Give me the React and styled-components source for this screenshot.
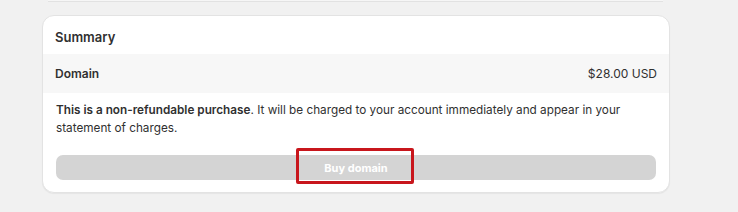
import React from "react";
import styled, { createGlobalStyle } from "styled-components";

const Global = createGlobalStyle`
  html, body { margin: 0; padding: 0; background: #f1f1f1; }
  body {
    font-family: Inter, "Noto Sans", sans-serif;
    color: #303030;
    -webkit-font-smoothing: antialiased;
  }
`;

const Page = styled.div`
  width: 738px;
  height: 212px;
  display: flex;
  flex-direction: column;
  box-sizing: border-box;
`;

const PrevCard = styled.div`
  margin: 0 75px 0 48px;
  height: 1px;
  background: #f6f6f6;
  border-bottom: 1px solid #e2e2e2;
`;

const Card = styled.section`
  margin: 13px 68px 0 42px;
  background: #ffffff;
  border: 1px solid #e3e3e3;
  border-radius: 12px;
  box-shadow: 0 1px 1px rgba(0, 0, 0, 0.05);
  overflow: hidden;
  display: flex;
  flex-direction: column;
`;

const Header = styled.h2`
  margin: 0;
  height: 38px;
  padding: 4px 12px 0;
  box-sizing: border-box;
  display: flex;
  align-items: center;
  font-size: 13px;
  font-weight: 600;
  color: #303030;
`;

const Row = styled.div`
  height: 39px;
  padding: 0 12px;
  display: flex;
  align-items: center;
  justify-content: space-between;
  background: #f7f7f7;
  font-size: 12px;
`;

const Label = styled.span`
  font-weight: 600;
`;

const Amount = styled.span`
  font-weight: 400;
`;

const Body = styled.div`
  padding: 8px 13px 12px 13px;
  display: flex;
  flex-direction: column;
  gap: 18px;
`;

const Notice = styled.p`
  margin: 0;
  font-size: 11.75px;
  line-height: 18px;
  strong { font-weight: 600; }
`;

const ButtonWrap = styled.div`
  position: relative;
  display: flex;
`;

const Button = styled.button`
  flex: 1;
  height: 25px;
  border: none;
  border-radius: 7px;
  background: #d4d4d4;
  color: #ffffff;
  font-family: inherit;
  font-size: 11px;
  font-weight: 700;
  cursor: default;
`;

const Highlight = styled.span`
  position: absolute;
  left: 240px;
  top: -7px;
  width: 112px;
  height: 30px;
  border: 3px solid #c8161c;
  border-radius: 2px;
  pointer-events: none;
`;

export default function App() {
  return (
    <>
      <Global />
      <Page>
        <PrevCard />
        <Card>
          <Header>Summary</Header>
          <Row>
            <Label>Domain</Label>
            <Amount>$28.00 USD</Amount>
          </Row>
          <Body>
            <Notice>
              <strong>This is a non-refundable purchase</strong>. It will be charged to your account immediately and appear in your statement of charges.
            </Notice>
            <ButtonWrap>
              <Button disabled>Buy domain</Button>
              <Highlight />
            </ButtonWrap>
          </Body>
        </Card>
      </Page>
    </>
  );
}
